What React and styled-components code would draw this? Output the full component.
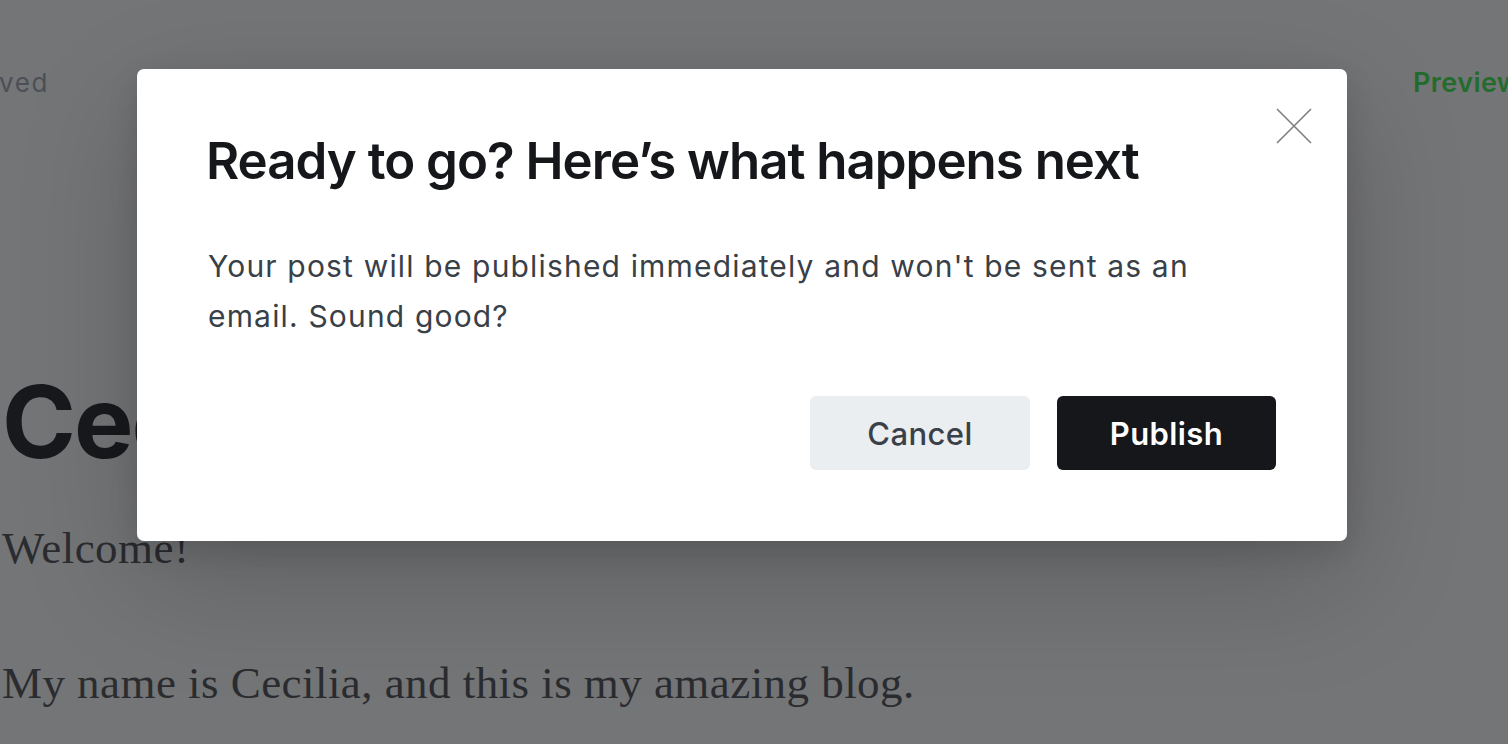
import React from "react";
import styled, { createGlobalStyle } from "styled-components";

const Global = createGlobalStyle`
  html, body { margin: 0; padding: 0; }
  body {
    width: 1508px;
    height: 744px;
    overflow: hidden;
    background: #747577;
    font-family: Inter, "Noto Sans", sans-serif;
  }
`;

const Page = styled.div`
  position: relative;
  width: 1508px;
  height: 744px;
  overflow: hidden;
  background: #747577;
`;

const TopBar = styled.div`
  display: grid;
  grid-template-columns: 49px 1364px 95px;
  align-items: center;
  height: 26px;
  padding-top: 70px;
`;

const StatusSlot = styled.div`
  display: flex;
  justify-content: flex-end;
  white-space: nowrap;
`;

const Status = styled.span`
  font-size: 26px;
  line-height: 26px;
  color: #4b4f55;
  letter-spacing: 1.6px;
`;

const PreviewLink = styled.span`
  grid-column: 3;
  white-space: nowrap;
  font-size: 27px;
  line-height: 26px;
  font-weight: 600;
  color: #236c2d;
  letter-spacing: 0.4px;
`;

const Content = styled.div`
  padding-top: 266px;
  padding-left: 2px;
`;

const PostTitle = styled.h1`
  margin: 0;
  font-family: Inter, sans-serif;
  font-weight: 700;
  font-size: 100px;
  line-height: 120px;
  color: #18191c;
  letter-spacing: -2px;
`;

const PostText = styled.p`
  margin: ${(p) => p.$top || 0}px 0 0;
  font-family: "Liberation Serif", "DejaVu Serif", serif;
  font-size: 45px;
  line-height: 60px;
  color: #2a2c30;
  letter-spacing: 0.45px;
`;

const Modal = styled.div`
  position: absolute;
  left: 137px;
  top: 69px;
  width: 1210px;
  height: 472px;
  box-sizing: border-box;
  background: #fff;
  border-radius: 7px;
  box-shadow: 0 40px 120px rgba(0, 0, 0, 0.18), 0 10px 30px rgba(0, 0, 0, 0.12);
  padding: 62px 71px 71px 69px;
  display: flex;
  flex-direction: column;
`;

const CloseButton = styled.button`
  position: absolute;
  top: 38px;
  right: 34px;
  width: 38px;
  height: 38px;
  padding: 0;
  border: 0;
  background: transparent;
  cursor: pointer;
  display: flex;
  align-items: center;
  justify-content: center;
`;

const Title = styled.h2`
  margin: 0;
  font-family: Inter, sans-serif;
  font-weight: 600;
  font-size: 51px;
  line-height: 60px;
  color: #15171a;
  letter-spacing: -1px;
`;

const Body = styled.p`
  margin: 50px 0 0 2px;
  font-family: Inter, sans-serif;
  font-size: 30px;
  line-height: 50px;
  color: #394047;
  letter-spacing: 1.17px;
  max-width: 1000px;
`;

const Actions = styled.div`
  margin-top: auto;
  display: flex;
  justify-content: flex-end;
  gap: 27px;
`;

const Button = styled.button`
  width: ${(p) => p.$w}px;
  height: 74px;
  padding: 0;
  border: 0;
  border-radius: 6px;
  font-family: Inter, sans-serif;
  font-size: 31px;
  letter-spacing: 0.4px;
  font-weight: ${(p) => (p.$primary ? 600 : 500)};
  background: ${(p) => (p.$primary ? "#15171a" : "#ebeef0")};
  color: ${(p) => (p.$primary ? "#ffffff" : "#394047")};
  cursor: pointer;
`;

export default function App() {
  return (
    <Page>
      <Global />
      <TopBar>
        <StatusSlot>
          <Status>Saved</Status>
        </StatusSlot>
        <PreviewLink>Preview</PreviewLink>
      </TopBar>
      <Content>
        <PostTitle>Cecilia</PostTitle>
        <PostText $top={36}>Welcome!</PostText>
        <PostText $top={75}>My name is Cecilia, and this is my amazing blog.</PostText>
      </Content>
      <Modal role="dialog">
        <CloseButton aria-label="Close">
          <svg width="38" height="38" viewBox="0 0 38 38">
            <path d="M2 2 L36 36 M36 2 L2 36" stroke="#7c7f83" strokeWidth="1.6" fill="none" />
          </svg>
        </CloseButton>
        <Title>Ready to go? Here’s what happens next</Title>
        <Body>
          Your post will be published immediately and won't be sent as an email. Sound good?
        </Body>
        <Actions>
          <Button $w={220}>Cancel</Button>
          <Button $w={219} $primary>Publish</Button>
        </Actions>
      </Modal>
    </Page>
  );
}
